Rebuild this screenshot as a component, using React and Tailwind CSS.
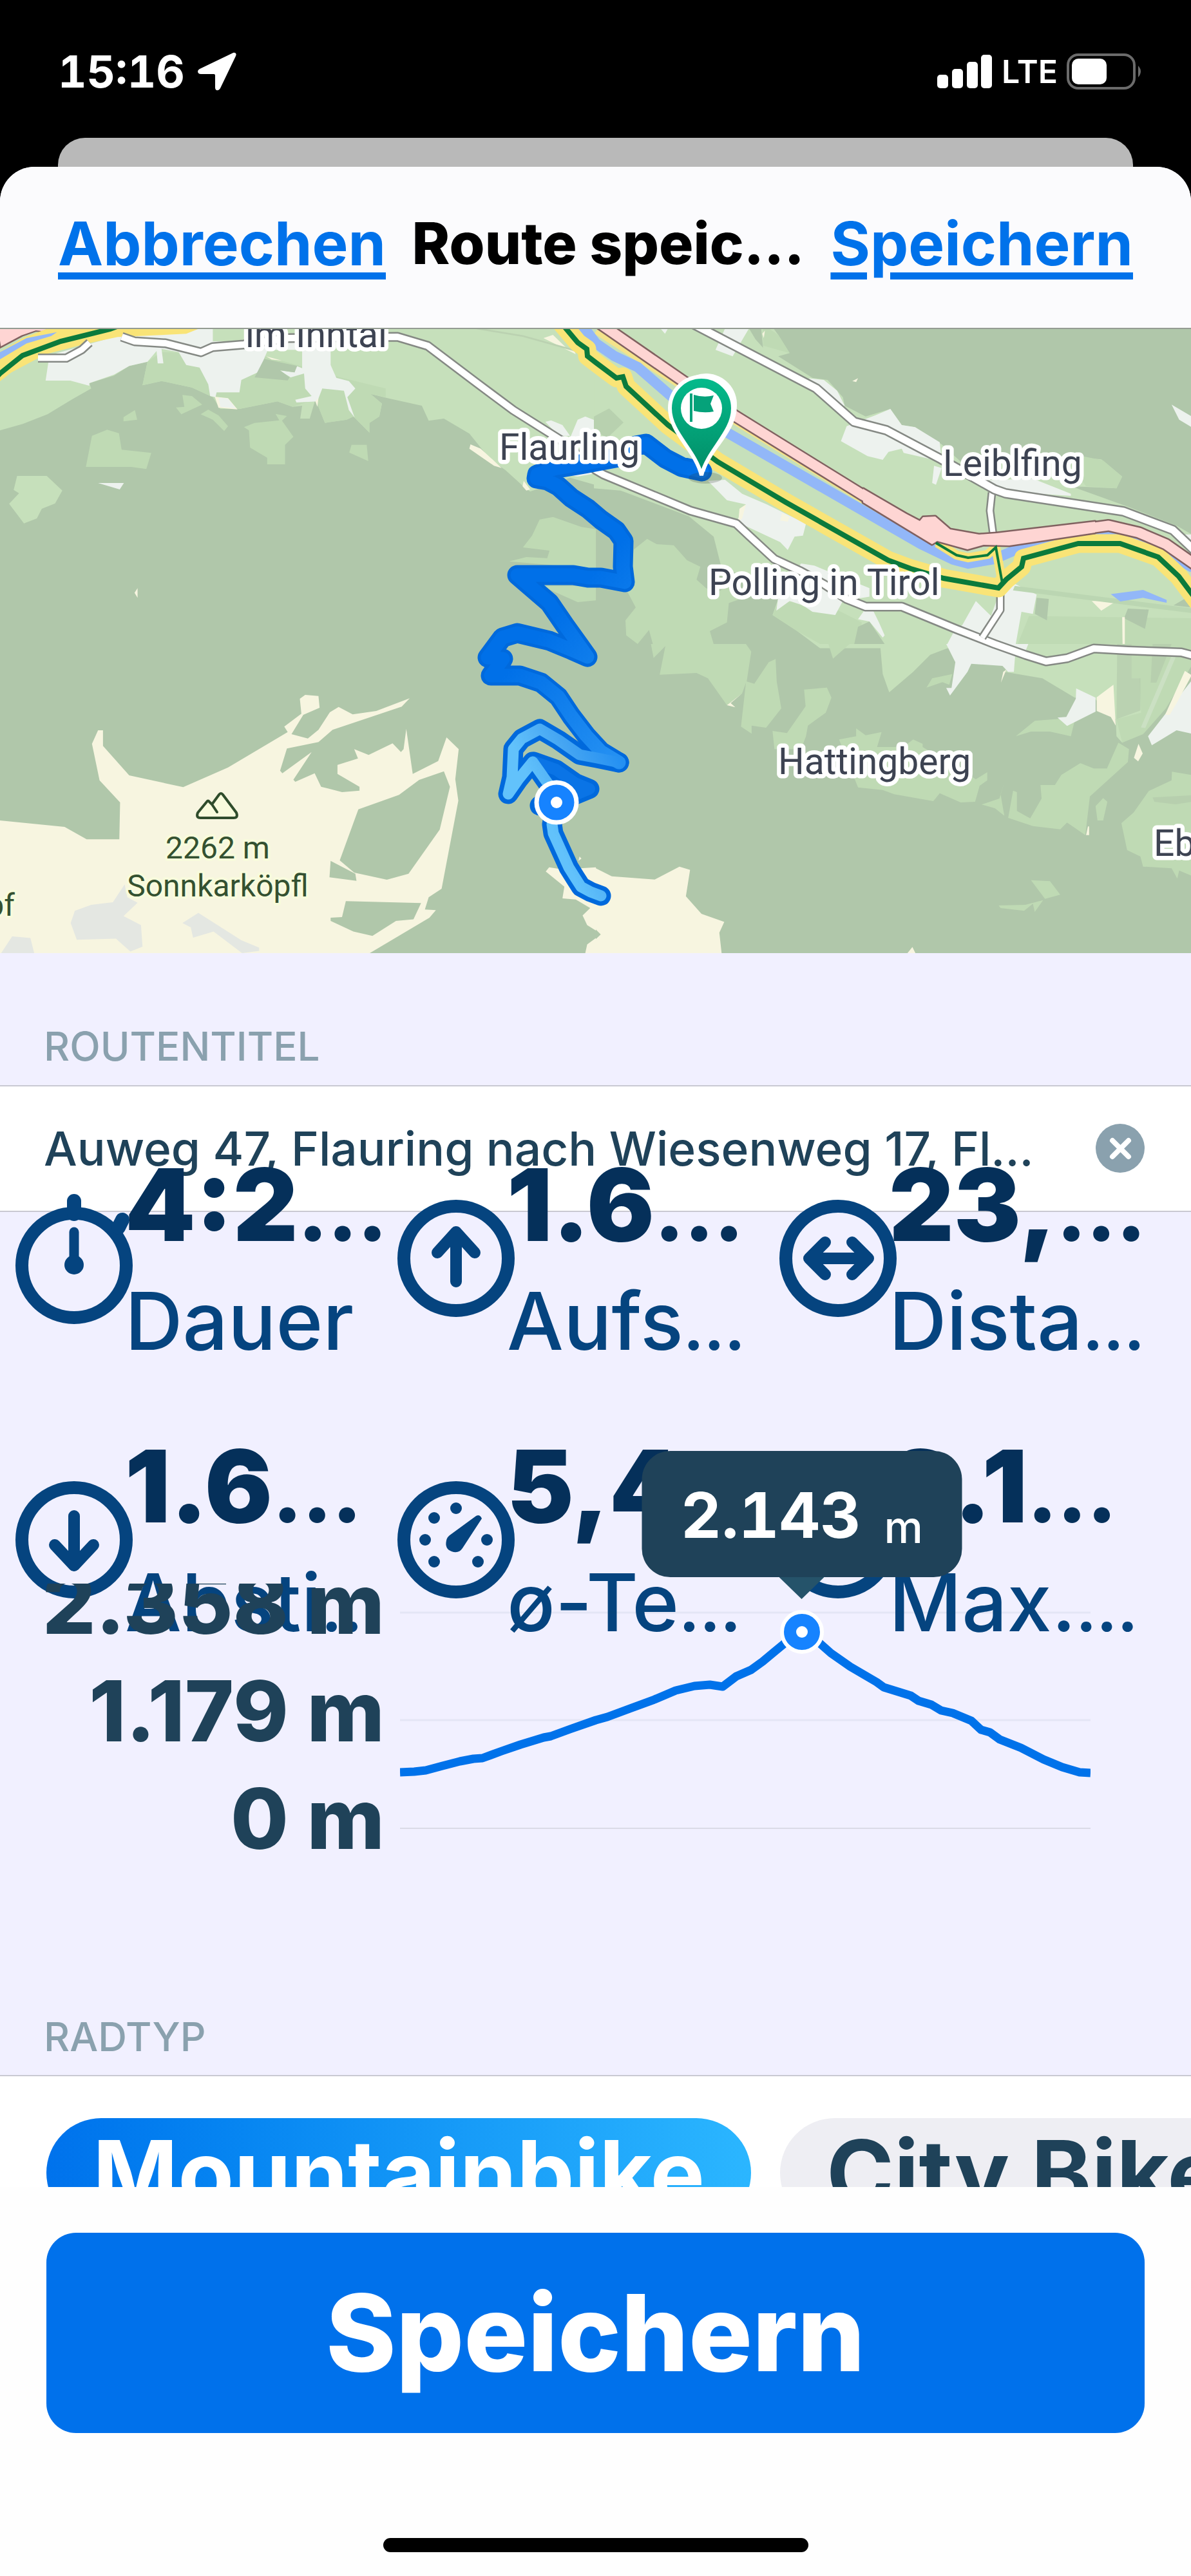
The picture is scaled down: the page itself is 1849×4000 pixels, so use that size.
import React, { useState } from "react";

const stats = [
  { icon: "watch", value: "4:2", label: "Dauer" },
  { icon: "up", value: "1.6", label: "Aufs", cut: true },
  { icon: "distance", value: "23,", label: "Dista", cut: true },
  { icon: "down", value: "1.6", label: "Absti", cut: true },
  { icon: "gauge", value: "5,4", label: "ø-Te", cut: true },
  { icon: "peak", value: "2.1", label: "Max.", cut: true },
];

const elevation =
  "0,293 22,292 40,290 66,283 93,276 114,272 128,271 158,260 187,250 223,239 234,237 264,226 304,212 322,207 357,194 395,180 428,166 457,159 481,157 501,160 522,144 545,134 563,121 581,106 598,92 625,72 651,92 669,108 699,129 740,153 751,161 793,174 805,182 825,188 840,197 858,201 887,213 902,227 916,231 931,242 964,255 999,273 1028,285 1055,293 1072,294";

function StatusBar() {
  return (
    <div className="flex h-[214px] items-center justify-between pb-0 pl-[90px] pr-[73px] pt-2 text-white">
      <div className="flex items-center gap-5">
        <span className="text-[69px] font-bold leading-none tabular-nums">15:16</span>
        <svg className="h-[60px] w-[60px]" viewBox="0 0 60 60" aria-label="Standort">
          <path fill="currentColor" d="M55 1 3 26c-5 3-3 8 2 8h20q2 0 2 2v19c0 5 5 6 8 1L59 6c2-4-1-6-4-5Z" />
        </svg>
      </div>
      <div className="flex items-center gap-[14px]">
        <svg className="h-[52px] w-[86px]" viewBox="0 0 86 52" fill="currentColor" aria-label="Empfang">
          <rect x="0" y="31" width="17" height="21" rx="5" />
          <rect x="23" y="22" width="17" height="30" rx="5" />
          <rect x="46" y="11" width="17" height="41" rx="5" />
          <rect x="68" y="0" width="17" height="52" rx="5" />
        </svg>
        <span className="text-[50px] font-semibold leading-none">LTE</span>
        <svg className="h-14 w-[120px]" viewBox="0 0 120 56" aria-label="Akku">
          <rect x="2" y="2" width="103" height="52" rx="16" fill="none" stroke="#6b6b6b" strokeWidth="4" />
          <rect x="8" y="8" width="54" height="40" rx="10" fill="#fff" />
          <path d="M111 19q8 9 0 18Z" fill="#6b6b6b" />
        </svg>
      </div>
    </div>
  );
}

const road = (d, w) => (
  <g fill="none" strokeLinejoin="round">
    <path d={d} stroke="#858984" strokeWidth={w + 5} />
    <path d={d} stroke="#fff" strokeWidth={w} />
  </g>
);

const mainRoad = "M870 500 897 532 911 542 912 553 925 563 957 587 967 585 972 600 1037 660 1114 717 1220 780 1379 870 1414 883 1465 898 1550 913 1562 900 1586 880 1589 867 1674 844 1739 844 1798 865 1830 895 1860 935";
const motorway = "M928 500 1061 592 1143 647 1340 769 1440 827 1500 841 1527 838 1567 837 1721 816 1768 827 1810 845 1860 880";
const junction = "M1340 759 1407 798 1428 809 1433 803 1452 802 1475 822 1520 830 1547 828 1700 810V827L1567 847 1527 846 1502 853 1455 840 1447 845 1340 780Z";
const northRoad = "M1070 500 1179 557 1267 603 1326 655 1376 668 1461 713 1544 760 1561 766 1744 794 1821 823 1860 860";
const southRoad = "M189 523 209 530 257 533 312 547 330 539 378 535 448 525 617 523 664 537 738 593 797 637 870 683 925 730 937 737 1072 793 1143 813 1161 830 1202 868 1243 887 1279 907 1314 930 1344 942 1400 942 1485 977 1544 1000 1592 1017 1624 1027 1657 1022 1698 1007 1751 1010 1834 1013 1860 1020";
const routeUpper = "M1090 732 1058 725 1033 712 1003 689 987 692 960 710 907 720 860 728 834 737 833 743 850 746 867 755 887 773 913 790 933 807 957 824 968 840 967 880 970 904 933 897 913 897 890 893 803 893 853 936 877 971 900 1003 912 1020 887 1009 853 995 803 983 780 990 757 1021 781 1023 762 1049 807 1049 840 1060 867 1082 887 1112 910 1142 933 1167 961 1184";
const routeLower = "M961 1184 927 1177 900 1172 867 1149 838 1132 810 1147 797 1163 795 1207 789 1233 805 1210 827 1183 853 1220 864 1246 857 1280 859 1294 883 1347 893 1363 902 1377 917 1385 933 1391";
const routeSpur = "M829 1183 863 1195 893 1216 915 1225 864 1246 838 1251";

function MapLabel({ x, y, size = 57, anchor = "start", peak = false, children }) {
  return (
    <text
      x={x}
      y={y}
      textAnchor={anchor}
      fontSize={size}
      fill={peak ? "#345130" : "#3d4352"}
      stroke={peak ? "#f8fbdc" : "#fff"}
      strokeWidth={peak ? 8 : 13}
      strokeLinejoin="round"
      paintOrder="stroke"
      fontFamily="Roboto, sans-serif"
    >
      {children}
    </text>
  );
}

function RouteMap() {
  return (
    <svg className="block h-[971px] w-full border-t-2 border-[#949c93] bg-[#b0c7aa]" viewBox="0 511 1849 969" preserveAspectRatio="xMidYMid slice" role="img" aria-label="Karte der Route">
      <defs>
        <linearGradient id="routeFade" gradientUnits="userSpaceOnUse" x1="960" y1="1170" x2="830" y2="1230">
          <stop offset="0" stopColor="#2490f2" />
          <stop offset=".5" stopColor="#45a5f2" />
          <stop offset="1" stopColor="#62c2fb" />
        </linearGradient>
        <linearGradient id="routeStart" gradientUnits="userSpaceOnUse" x1="790" y1="1040" x2="950" y2="1180">
          <stop offset="0" stopColor="#0070e8" />
          <stop offset="1" stopColor="#2490f2" />
        </linearGradient>
        <linearGradient id="pin" x1="0" y1="0" x2="0" y2="1">
          <stop offset="0" stopColor="#04bb8c" />
          <stop offset="1" stopColor="#028c66" />
        </linearGradient>
      </defs>

      {/* north-west quarter */}
      <g transform="translate(0 500) scale(.59 .3333)">
        <path fill="#c6e0bb" d="M0 0H1568V760L1500 725 1395 790 1380 770 1330 690 1290 640 1235 520 1168 450 1128 460 1110 390 1020 355 975 335 1005 380 998 440 972 470V515L930 440 912 455 855 470 830 360 815 450H790L795 390 770 395 730 370 630 405H580L560 350 505 305 425 275 375 295 388 185 340 205 300 250 235 285 240 310 190 360 125 430 60 475 0 505Z" />
        <path fill="#bfdab4" d="M425 140 388 185 375 295 425 275 505 305 560 350 580 405 630 405 730 370 770 395 830 360 855 470 912 455 930 440 972 515 972 470 998 440 1005 380 975 335 1015 350 1015 310 900 260 700 160Z" />
        <path fill="#edf2ee" d="M130 155 120 273H185L235 297 235 285 300 245 340 205 388 185 412 135 415 193H430L425 125 470 140 490 200 525 212 548 290 553 345 567 350 570 328H630L635 270 690 225 695 170 705 130H795V215L780 205 775 235 735 225 765 258 800 240 803 310 820 345 777 362 780 375 835 370 848 310 905 320 918 410 933 445 914 350 935 310 918 275 885 260 870 200V90H560V30H500L300 70Z" />
        <path fill="#b0c7aa" d="M695 172 782 205 775 235 737 225 762 258 757 272 670 258Z" />
        <path fill="#bfdab4" d="M480 340 505 345 532 385 477 430 463 398 485 395ZM355 410 361 455 325 463V443ZM548 408 575 435 600 485 590 508 560 455 528 430ZM242 530 282 502 313 518 320 595 398 610 385 685 345 675H226ZM642 490 670 470 735 458 725 428 755 438 742 460 772 535 750 572V663H703V632L658 585 655 505ZM925 572H965L969 648 919 608ZM1420 920 1455 908 1530 955 1568 965V1150L1340 1115 1385 1095 1440 1100 1446 1065 1376 1050 1400 995ZM1425 1230H1568V1297L1520 1305Z" />
        <path fill="#c6e0bb" d="M45 717H123L164 785 145 845 110 870 97 915 63 938 24 847 50 798 36 782Z" />
        <path fill="#f7f5e0" d="M1238 570 1265 590 1320 680 1300 670 1235 590ZM1430 75 1455 60 1490 120 1510 130 1515 150ZM362 1240V1285L354 1262ZM565 348 600 355 625 407 575 400ZM830 370 838 355 835 395ZM1378 740 1395 780 1385 785 1375 765ZM700 160 742 180 715 175Z" />
        <path fill="#edf2ee" d="M258 750H326L315 780ZM575 352 600 357 620 402 580 395ZM1435 465 1450 458 1480 480 1500 530 1470 530ZM1520 455 1540 440 1568 460V560L1500 540ZM1470 705 1568 690V705L1520 720Z" />
        <path fill="none" stroke="#bbd2b1" strokeWidth="8" d="M1255 30 1375 65 1568 160" />
        <path fill="#fed5d3" stroke="#806160" strokeWidth="6" d="M-10 10 170 10 110 45 95 42 58 65 0 120Z" />
        <path fill="#f9e477" d="M-10 290 30 235 120 150 230 100 310 70 490 55 525 30V0H170L60 75-10 150Z" />
        <path fill="#92b7f8" d="M-10 150 70 75 150 47 135 65 70 100-10 185Z" />
      </g>

      {/* north-east quarter */}
      <g transform="translate(925 500) scale(.59 .3333)">
        <path fill="#c6e0bb" d="M-5 0H455L480 60 510 145 480 160 570 260 610 270 650 350 655 390 710 440 775 405 805 480 840 490 910 570 960 650 1270 630 1330 640 1385 720 1370 775 1250 765 1400 860 1530 950 1568 990V1520H590L530 1440 465 1365 480 1290 430 1230 370 1170 330 1140 310 1000 245 905 65 785-5 775Z" />
        <path fill="#bfdab4" d="M440 30H455L480 60 510 145 440 110ZM135 1010 160 1035 205 1040 240 1110 275 1140 265 1200 290 1240 320 1260 345 1230 380 1290 350 1310 345 1400 300 1440 310 1500H150L140 1435 110 1500 80 1460 78 1390 105 1330 78 1240 95 1150 100 1060ZM480 1310 530 1300 600 1310 700 1400 690 1500H590L530 1440 465 1365ZM1140 1370 1568 1380V1500H1110Z" />
        <path fill="#b0c7aa" d="M403 30H435L440 120 420 80ZM690 1420 720 1395 760 1500H680ZM1160 1285 1192 1290 1187 1390 1155 1360ZM1400 1335 1455 1340 1445 1430 1390 1380ZM1520 1320 1568 1270V1330Z" />
        <path fill="#b8d1af" d="M-5 440 35 403 73 468 30 540-5 505Z" />
        <path fill="#edf2ee" d="M170 30H190L182 55ZM340 30H403L360 160 315 130ZM560 262 600 270 635 320 655 390 640 390ZM660 485 735 435 775 405 805 480 840 490 905 560 910 650 810 610 805 590 770 605 755 642 715 625 645 555ZM890 670 910 680 895 758 885 750ZM990 740 1150 730 1250 800V810L1080 790ZM295 740 340 735 385 800 450 850 553 940 545 995 523 1000 505 1062 485 1025 370 930 395 850 345 830ZM540 1125 575 1135 720 1240 720 1280 650 1300 630 1365 570 1350 545 1320 510 1300 475 1345 480 1280ZM690 1385 720 1310 745 1400 760 1460 755 1470 720 1395ZM1080 1200 1160 1270 1150 1360 1120 1350 1105 1500H925L940 1450 965 1410 1000 1300 1040 1370 1060 1270ZM1515 385 1568 440V490L1535 455ZM1550 990H1568V1050Z" />
        <path fill="#bfdab4" d="M1230 625H1280L1335 645 1385 720 1370 775 1290 765Z" />
        <path fill="#f7f5e0" d="M378 870 395 850 385 915 375 930ZM490 890 510 910 505 930 485 925ZM675 275 690 262 685 280ZM1305 1300 1370 1300 1330 1345ZM1385 1375 1392 1375V1500H1386ZM438 55 445 40 442 75Z" />
        <path fill="none" stroke="#bbd6b2" strokeWidth="22" d="M1100 1240 1568 1345" />
        <path fill="#92b7f8" d="M1355 1268 1440 1248 1502 1295V1308L1440 1285 1380 1302Z" />
      </g>

      {/* south-west quarter */}
      <g transform="translate(0 1000) scale(.59 .3333)">
        <path fill="#f7f5e0" d="M0 822 170 852 228 910H314L316 738 262 635 242 465 258 402H271V475L340 612 482 667 600 575 757 410 748 385 793 325 789 255 803 237 838 242 841 297 798 330 767 420 810 440 838 400 868 318 891 293 928 328 990 312 1078 253 1057 292 875 400 838 457 755 487 737 590 743 602 820 503 772 632 777 642 828 602 845 665 900 690 946 683V665L888 605V563L942 533 932 490 970 517 1033 463 1055 503 1062 490 1069 395 1086 605 1153 545 1175 435 1207 490 1198 630 1206 730 1162 1140 1128 1180 1118 1237 1147 1240 1130 1275 973 1440H0ZM1445 1040 1480 1050 1568 1040V1440H1540L1545 1400 1568 1370V1335L1545 1310 1533 1265 1553 1230 1515 1190 1480 1185 1485 1130 1436 1060ZM1525 990 1530 1000 1522 1010Z" />
        <path fill="#b0c7aa" d="M1168 593 1103 633 1050 703 943 770 894 1008 932 1065 1018 1098 1075 1070 1157 865 1184 665ZM870 1010 935 1070 938 1103 867 1087ZM910 1198 1108 1207 1088 1283 1042 1290 980 1360 930 1340 870 1290V1275L900 1272Z" />
        <path fill="#e4e7e2" d="M328 1120 335 1180 362 1205 325 1268 371 1310 375 1410 343 1433 305 1373 202 1378 186 1300 197 1243 240 1215 297 1203ZM522 1253 635 1380 682 1415V1430L637 1440 562 1340 508 1368 502 1320 480 1300ZM32 1362 80 1370 90 1440H3Z" />
      </g>

      {/* south-east quarter */}
      <g transform="translate(925 1000) scale(.59 .3333)">
        <path fill="#c6e0bb" d="M1110 0H1568V40L1540 50 1480 290 1440 400 1385 460 1370 430 1368 350 1310 250H1260L1175 160 1075 130 1100 60ZM748 0H850L940 10 880 50 835 130 772 225 755 140Z" />
        <path fill="#bfdab4" d="M145 0H395L409 35 397 175 417 185 455 85 473 70 476 175 488 300 448 390 410 380V418L382 385 395 180 385 230 345 285 295 160 265 135 168 143 183 10 152 65ZM612 0H668L624 68ZM548 212 608 203 620 250 605 320 558 380 553 430 540 490H470L465 405 503 415 552 290ZM640 445 685 430V393L710 425 752 410 740 480 860 480 1000 630 1030 597 1030 635 1010 660 998 735 960 738 905 695 888 732 785 700 755 680 690 668ZM820 465 835 445 860 465V500H820ZM870 203 885 160 938 140 930 190 912 178ZM1105 430 1155 358 1262 343 1250 430 1195 408 1145 408ZM1275 555 1310 580H1345L1375 460 1403 490 1400 550 1300 710 1288 890 1240 832 1222 863 1150 848 1085 810 1098 683 1108 690V778L1143 812 1173 720 1170 657H1208L1225 610ZM1015 748 1062 720 1075 645 1065 700 1075 800 1050 765ZM1335 718 1346 735 1335 822H1320L1315 755ZM1516 595 1568 610V1080L1535 1055 1530 1093 1515 1045 1440 1037 1433 990 1398 960 1383 835 1415 785 1455 685 1515 635ZM1145 1100 1195 1105 1222 1168 1182 1187ZM1060 1218 1130 1215 1177 1193 1155 1248 1150 1210 1127 1243 1065 1230ZM1410 0H1568V100L1500 300 1440 420 1385 460 1370 350 1435 320 1430 160H1410Z" />
        <path fill="#b0c7aa" d="M1465 715 1568 705V735L1525 747 1470 735ZM1372 0H1410V160H1433V310L1370 350ZM1465 0H1515L1475 180H1460Z" opacity=".55" />
        <path fill="#edf2ee" d="M922 0H1138L1130 35 1105 15 1100 130H1085L1070 102 988 92 978 130 932 240 922 205H936L946 85ZM1264 207 1315 250V315L1240 382 1215 343 1238 340 1263 255ZM1568 170V418L1528 402 1463 472 1453 430 1510 300Z" />
        <path fill="#f7f5e0" d="M1362 190 1368 380 1355 340 1318 312V248ZM1428 465 1439 510 1427 547 1416 530ZM1550 125 1568 145 1530 270 1510 330 1498 330ZM1072 130 1080 120 1066 180ZM385 230 355 275 367 295 345 285ZM1295 850H1298V890H1290ZM0 1045 42 1082 155 1097 220 1037 248 1052 237 1175 278 1257 338 1295 325 1345 331 1440H0V1375L13 1353 0 1330ZM833 1412 841 1440H820Z" />
        <path fill="none" stroke="#cbe0c3" strokeWidth="12" d="M1520 60 1440 390" />
      </g>

      {/* roads and river */}
      <path d="M-10 590 0 580 35 552 94 530 171 511 200 500" fill="none" stroke="#0b7a3c" strokeWidth="8" />
      {road("M59 556 103 556 127 543 139 532", 9)}
      {road(southRoad, 10)}
      {road("M1540 765 1537 793 1543 838", 8)}
      {road("M1553 915 1553 947 1525 990", 8)}
      {road(northRoad, 11)}
      <path d="M925 515 1061 603 1143 657 1340 778 1450 848" fill="none" stroke="#f4e38a" strokeWidth="8" />
      <path d="M900 500 925 533 954 553 990 570 1043 616 1131 673 1340 793 1430 845 1480 869 1503 875 1544 868 1574 855 1621 845" fill="none" stroke="#92b7f8" strokeWidth="16" />
      <path d="M1588 846 1621 840 1716 826 1768 838 1850 885" fill="none" stroke="#92b7f8" strokeWidth="8" />
      <path d={mainRoad} fill="none" stroke="#f9e477" strokeWidth="29" strokeLinejoin="round" />
      <path d="M1455 843 1485 862 1503 866 1533 861 1546 850 1556 905" fill="none" stroke="#f9e477" strokeWidth="14" />
      <g stroke="#806160" strokeWidth="5" strokeLinejoin="round">
        <path d={motorway} fill="none" strokeWidth="20" />
        <path d={junction} fill="#fed5d3" />
      </g>
      <path d={motorway} fill="none" stroke="#fed5d3" strokeWidth="15" strokeLinejoin="round" />
      <path d={junction} fill="#fed5d3" />
      <path d={mainRoad} fill="none" stroke="#0b7a3c" strokeWidth="8" />
      <path d="M1453 843 1485 862 1503 866 1533 862 1546 850 1556 905" fill="none" stroke="#0b7a3c" strokeWidth="4" />

      <MapLabel x="381" y="539">im Inntal</MapLabel>
      <MapLabel x="1464" y="739">Leiblfing</MapLabel>
      <MapLabel x="1100" y="924">Polling in Tirol</MapLabel>
      <MapLabel x="1208" y="1202">Hattingberg</MapLabel>
      <MapLabel x="1791" y="1329">Eb</MapLabel>
      <MapLabel x="338" y="1333" size={48} anchor="middle" peak>2262 m</MapLabel>
      <MapLabel x="338" y="1392" size={48} anchor="middle" peak>Sonnkarköpfl</MapLabel>
      <MapLabel x="23" y="1422" size={48} anchor="end" peak>Kopf</MapLabel>
      <path d="M307 1262 321 1245q2-3 4 0l4 4 11-15q3-4 6 0l21 28q3 8-4 8H311q-7 0-4-8ZM329 1249l8 12" fill="#f8fbdc" stroke="#2f4c2b" strokeWidth="4" strokeLinecap="round" strokeLinejoin="round" />

      {/* recorded route */}
      <g fill="none" strokeLinecap="round" strokeLinejoin="round">
        <path d={routeUpper} stroke="#0069dc" strokeWidth="31" />
        <path d={routeLower} stroke="#0069dc" strokeWidth="31" />
        <path d={routeSpur} stroke="#0069dc" strokeWidth="31" />
        <path d={routeSpur} stroke="#0a74e6" strokeWidth="18" />
        <path d={routeUpper} stroke="url(#routeStart)" strokeWidth="21" />
        <path d={routeLower} stroke="url(#routeFade)" strokeWidth="17" />
      </g>
      <MapLabel x="775" y="714">Flaurling</MapLabel>
      <circle cx="864" cy="1246" r="31" fill="#1683ff" stroke="#fff" strokeWidth="7" />
      <circle cx="864" cy="1246" r="9" fill="#fff" />
      <ellipse cx="1095" cy="742" rx="26" ry="9" fill="#303c35" opacity=".22" />
      <path d="M1094 733C1104 698 1144 672 1144 630a48 48 0 0 0-96-4" fill="#fff" />
      <path d="M1089 738C1079 698 1040 672 1040 634a49 49 0 0 1 98 0c0 38-39 64-49 104Z" fill="url(#pin)" stroke="#fff" strokeWidth="6" />
      <circle cx="1089" cy="634" r="32" fill="#fff" />
      <path d="M1071 611h4v44h-4ZM1077 613q16 5 31 1l-5 13 5 12q-15 3-31-1Z" fill="#05a27a" />
    </svg>
  );
}

function StatIcon({ name }) {
  return (
    <svg className="-mr-3 mt-[73px] h-[202px] w-[182px] shrink-0" viewBox="0 0 182 202" fill="none" stroke="#05447f" strokeWidth="18" strokeLinecap="round" strokeLinejoin="round" aria-hidden="true">
      <circle cx="91" cy={name === "watch" ? 111 : 100} r="81" strokeWidth="20" />
      {name === "watch" && (
        <>
          <path d="M91 11v20M160 52l6-12" strokeWidth="22" />
          <path d="M91 59v50" strokeWidth="15" />
          <circle cx="91" cy="110" r="15" fill="#05447f" stroke="none" />
        </>
      )}
      {name === "up" && <path d="M91 136V62M62 91l29-32 29 32" />}
      {name === "down" && <path d="M91 63v74M61 108l30 32 30-32" />}
      {name === "distance" && <path d="M46 100h90M71 75 46 100l25 25M113 75l25 25-25 25" />}
      {name === "gauge" && (
        <g fill="#05447f" stroke="none">
          <path d="M122 63q6-3 9 4l-30 46q-6 9-17 5t-8-17q1-5 5-8Z" />
          <circle cx="91" cy="51" r="9" />
          <circle cx="57" cy="66" r="9" />
          <circle cx="43" cy="100" r="9" />
          <circle cx="57" cy="134" r="9" />
          <circle cx="139" cy="100" r="9" />
          <circle cx="125" cy="134" r="9" />
        </g>
      )}
      {name === "peak" && <path d="M50 122 80 70l18 28 10-14 24 38Z" />}
    </svg>
  );
}

function ElevationChart() {
  return (
    <section className="relative -mt-[119px] flex gap-6 pr-[156px]" aria-label="Höhenprofil">
      <div className="w-[597px] shrink-0 overflow-hidden whitespace-nowrap text-right text-[130px] font-extrabold leading-[167px] text-[#1f4259]">
        <div className="-mt-[53px]">2.358 m</div>
        <div>1.179 m</div>
        <div>0 m</div>
      </div>
      <div className="relative min-w-0 flex-1">
        <svg className="block h-[448px] w-full" viewBox="0 0 1072 448" preserveAspectRatio="none" aria-hidden="true">
          <path d="M0 45H1072M0 212H1072" stroke="#1f4259" strokeOpacity=".06" strokeWidth="3" />
          <path d="M0 380H1072" stroke="#dadae6" strokeWidth="2" />
          <polyline points={elevation} fill="none" stroke="#0072ea" strokeWidth="13" strokeLinejoin="round" vectorEffect="non-scaling-stroke" />
        </svg>
        <div className="absolute left-[58.2%] top-[41px] flex h-[68px] w-[68px] -translate-x-1/2 items-center justify-center rounded-full border-[6px] border-white bg-[#1683ff]">
          <span className="h-[18px] w-[18px] rounded-full bg-white" />
        </div>
        <div className="absolute left-[58.2%] top-[-206px] flex -translate-x-1/2 flex-col items-center">
          <div className="flex h-[196px] w-[497px] items-baseline justify-center gap-9 whitespace-nowrap rounded-[44px] bg-[#1f4259] text-white">
            <strong className="text-[98px] font-bold leading-[200px] tabular-nums">2.143</strong>
            <span className="relative top-2 text-[68px] font-medium leading-none">m</span>
          </div>
          <svg className="h-[34px] w-[70px]" viewBox="0 0 70 34" aria-hidden="true">
            <path d="M0 0H70L35 34Z" fill="#25536a" />
          </svg>
        </div>
      </div>
    </section>
  );
}

export default function App() {
  const [title, setTitle] = useState("Auweg 47, Flauring nach Wiesenweg 17, Fl...");

  return (
    <div className="min-h-screen overflow-hidden bg-black font-[Inter,sans-serif]">
      <StatusBar />
      <div className="mx-[90px] -mb-12 h-[93px] rounded-t-[42px] bg-[#b9b9b9]" />

      <main className="relative overflow-hidden rounded-t-[54px] bg-[#f1f0ff]">
        <header className="flex h-[250px] items-center justify-between gap-6 bg-[#fbfbfd] px-[90px] pb-3 text-[94px] font-bold">
          <a href="#abbrechen" className="text-[#0072ea] underline decoration-[11px] underline-offset-[11px]">Abbrechen</a>
          <h1 className="min-w-0 flex-1 whitespace-nowrap text-center text-[89px] font-extrabold text-black">Route speic...</h1>
          <a href="#speichern" className="text-[#0072ea] underline decoration-[11px] underline-offset-[11px]">Speichern</a>
        </header>

        <RouteMap />

        <section>
          <label htmlFor="title" className="block border-b-2 border-[#c9c9d2] px-[68px] pb-6 pt-[109px] text-[62px] font-medium leading-[72px] text-[#8aa1ae]">
            ROUTENTITEL
          </label>
          <div className="flex h-[195px] items-center justify-between border-b-2 border-[#c9c9d2] bg-white pl-[68px] pr-[71px]">
            <input
              id="title"
              value={title}
              onChange={(e) => setTitle(e.target.value)}
              className="min-w-0 flex-1 bg-transparent text-[73px] font-medium text-[#1f4259] outline-none"
            />
            <button type="button" aria-label="Titel löschen" onClick={() => setTitle("")}>
              <svg className="h-[77px] w-[77px]" viewBox="0 0 77 77" aria-hidden="true">
                <circle cx="38" cy="38" r="38" fill="#8aa1ae" />
                <path d="M26 26 51 51M51 26 26 51" stroke="#fff" strokeWidth="8" strokeLinecap="round" />
              </svg>
            </button>
          </div>
        </section>

        <section className="relative -mt-[101px] grid grid-cols-3 gap-y-[77px] pl-6 pr-[46px]" aria-label="Statistik">
          {stats.map((s) => (
            <div key={s.label} className="flex min-w-0 items-start whitespace-nowrap">
              <StatIcon name={s.icon} />
              <div>
                <div className="h-[180px] text-[156px] font-black leading-[180px] text-[#05305a]">
                  {s.value}
                  <span className="text-[124px] leading-none">...</span>
                </div>
                <div className="h-[180px] text-[124px] font-medium leading-[180px] text-[#05447f]">
                  {s.label}
                  {s.cut && <span className="text-[96px] font-bold leading-none">...</span>}
                </div>
              </div>
            </div>
          ))}
        </section>

        <ElevationChart />

        <section>
          <h2 className="border-b-2 border-[#c9c9d2] px-[68px] pb-[23px] pt-[220px] text-[62px] font-medium leading-[72px] text-[#8aa1ae]">RADTYP</h2>
          <div className="flex h-[172px] gap-[45px] overflow-hidden whitespace-nowrap bg-white pl-[72px] pt-[65px] text-[142px] font-bold">
            <button type="button" className="h-[170px] shrink-0 rounded-full bg-linear-to-r from-[#0072ec] to-[#2bb6ff] px-[72px] leading-[170px] text-white">Mountainbike</button>
            <button type="button" className="h-[170px] shrink-0 rounded-full bg-[#eeeef3] px-[72px] leading-[170px] text-[#1f4259]">City Bike</button>
          </div>
        </section>

        <footer className="flex flex-col items-center bg-[#fefefe] px-[72px] pb-[38px] pt-[71px]">
          <button type="button" className="h-[311px] w-full rounded-[46px] bg-[#0071eb] text-[165px] font-extrabold text-white">Speichern</button>
          <div className="mt-[163px] h-[22px] w-[660px] rounded-full bg-black" />
        </footer>
      </main>
    </div>
  );
}
